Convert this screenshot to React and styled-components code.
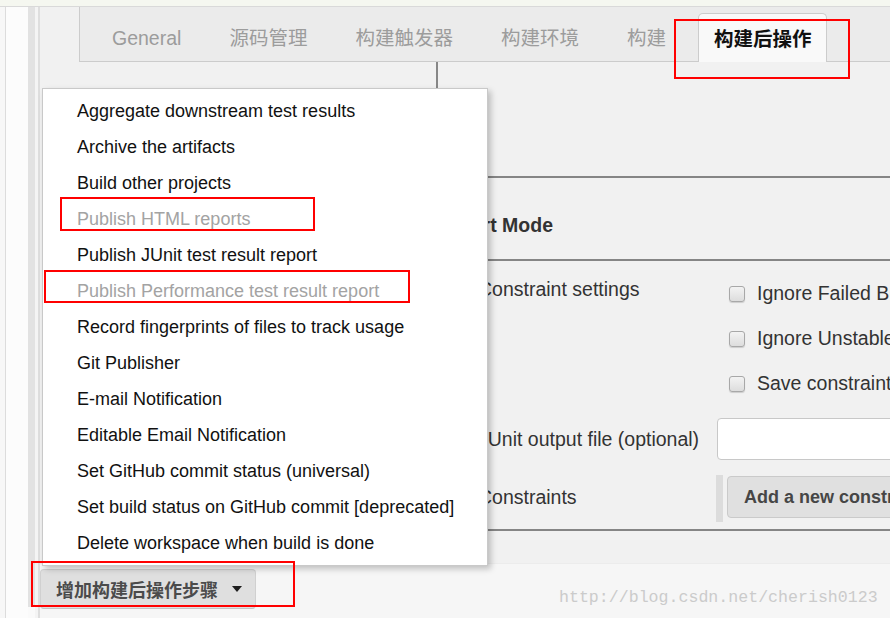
import React from "react";
import styled, { createGlobalStyle } from "styled-components";

const GlobalStyle = createGlobalStyle`
	html, body {
		margin: 0;
		padding: 0;
		background: #ffffff;
	}
	body {
		font-family: "Liberation Sans", "Noto Sans CJK SC", Arial, sans-serif;
	}
`;

const Root = styled.div`
	position: relative;
	width: 890px;
	height: 618px;
	overflow: hidden;
	background: #fafafa;
`;

const TopStrip = styled.div`
	height: 6px;
	background: #f5f7f0;
	border-bottom: 1px solid #d9d9d9;
`;

const Body = styled.div`
	display: flex;
	height: 611px;
`;

const Gutter = styled.div`
	display: flex;
	width: 40px;
	flex: none;
`;

const Lane = styled.div`
	width: ${(p) => p.w}px;
	background: ${(p) => p.bg};
	margin-bottom: ${(p) => p.cut || 0}px;
`;

const Main = styled.div`
	flex: 1;
	display: flex;
	flex-direction: column;
	background: #f1f1f1;
	min-width: 0;
`;

const TabBar = styled.div`
	display: flex;
	align-items: flex-end;
	height: 54px;
	margin-left: 39px;
	padding-left: 8px;
	width: 900px;
	background: #ebebeb;
	border-left: 1px solid #cccccc;
	border-bottom: 1px solid #cccccc;
	flex: none;
`;

const Tab = styled.div`
	height: 48px;
	line-height: 50px;
	padding: 0 24px;
	font-size: 19.5px;
	color: #9c9c9c;
	white-space: nowrap;
`;

const ActiveTab = styled.div`
	position: relative;
	height: 48px;
	line-height: 50px;
	margin-left: 8px;
	margin-bottom: -1px;
	padding: 0 15px;
	font-size: 19.5px;
	font-weight: bold;
	color: #111111;
	background: #f9f9f9;
	border: 1px solid #cccccc;
	border-bottom: none;
	border-radius: 5px 5px 0 0;
	white-space: nowrap;
`;

const Form = styled.div`
	margin-left: 396px;
	display: flex;
	flex-direction: column;
	height: 501px;
	flex: none;
`;

const PrevSection = styled.div`
	height: 114px;
	border-left: 2px solid #878787;
`;

const Rule = styled.div`
	height: 2px;
	background: #858585;
`;

const SectionTitle = styled.div`
	height: 81px;
	box-sizing: border-box;
	padding: 37px 0 0 0;
	line-height: 20px;
	font-size: 19.5px;
	font-weight: bold;
	color: #333333;
`;

const Row = styled.div`
	display: grid;
	grid-template-columns: 280px 1fr;
	align-items: ${(p) => p.align || "center"};
	padding-top: ${(p) => p.pad}px;
	margin-bottom: ${(p) => p.after || 0}px;
`;

const Label = styled.div`
	padding-left: 42px;
	padding-top: ${(p) => p.top || 0}px;
	padding-bottom: ${(p) => p.bottom || 0}px;
	font-size: 19.5px;
	line-height: 20px;
	color: #333333;
	white-space: nowrap;
`;

const CheckList = styled.div`
	display: flex;
	flex-direction: column;
	padding-left: 13px;
`;

const CheckItem = styled.label`
	display: flex;
	align-items: center;
	height: 45px;
	font-size: 19.5px;
	color: #333333;
	white-space: nowrap;
`;

const Box = styled.span`
	width: 14px;
	height: 14px;
	margin-right: 12px;
	border: 1px solid #a8a8a8;
	border-radius: 3px;
	background: linear-gradient(#f3f3f3, #dddddd);
	box-shadow: 0 1px 1px rgba(0, 0, 0, 0.15);
	flex: none;
`;

const TextInput = styled.div`
	height: 40px;
	margin-left: 1px;
	width: 300px;
	background: #ffffff;
	border: 1px solid #c8c8c8;
	border-radius: 4px;
`;

const ButtonStrip = styled.div`
	display: flex;
	height: 47px;
	border-left: 7px solid #dcdcdc;
	box-sizing: border-box;
	padding: 1px 0 0 4px;
`;

const GrayButton = styled.div`
	display: flex;
	align-items: center;
	height: 40px;
	padding: 0 16px;
	font-size: 18px;
	font-weight: bold;
	color: #464646;
	background: #e0e0e0;
	border: 1px solid #cacaca;
	border-radius: 4px;
	white-space: nowrap;
`;

const BottomBar = styled.div`
	flex: 1;
	background: #f6f6f6;
	border-top: 1px solid #ececec;
	padding-top: 5px;
`;

const AddButton = styled.div`
	display: inline-flex;
	align-items: center;
	box-sizing: border-box;
	height: 40px;
	width: 216px;
	padding: 0 14px 0 15px;
	font-size: 18px;
	font-weight: bold;
	color: #4b4b4b;
	background: #dfdfdf;
	border: 1px solid #d0d0d0;
	border-bottom-color: #c4c4c4;
	border-radius: 4px;
	white-space: nowrap;
`;

const Caret = styled.span`
	margin-left: 14px;
	width: 0;
	height: 0;
	border-left: 5px solid transparent;
	border-right: 5px solid transparent;
	border-top: 6px solid #1e1e1e;
`;

const Menu = styled.ul`
	position: absolute;
	left: 42px;
	top: 88px;
	width: 446px;
	height: 478px;
	box-sizing: border-box;
	margin: 0;
	padding: 4px 0 0 34px;
	list-style: none;
	background: #ffffff;
	border: 1px solid #c9c9c9;
	box-shadow: 3px 3px 6px rgba(0, 0, 0, 0.22);
`;

const MenuItem = styled.li`
	height: 36px;
	line-height: 36px;
	font-size: 18px;
	color: ${(p) => (p.disabled ? "#a3a3a3" : "#111111")};
	white-space: nowrap;
`;

const Mark = styled.div`
	position: absolute;
	left: ${(p) => p.x}px;
	top: ${(p) => p.y}px;
	width: ${(p) => p.w}px;
	height: ${(p) => p.h}px;
	box-sizing: border-box;
	border: 2px solid #ff0000;
	pointer-events: none;
`;

const Watermark = styled.div`
	position: absolute;
	left: 559px;
	top: 587px;
	font-family: "Liberation Mono", "DejaVu Sans Mono", monospace;
	font-size: 16.6px;
	line-height: 22px;
	color: #cbcbcb;
	white-space: nowrap;
`;

const tabs = ["General", "源码管理", "构建触发器", "构建环境", "构建"];

const menuItems = [
	{ text: "Aggregate downstream test results" },
	{ text: "Archive the artifacts" },
	{ text: "Build other projects" },
	{ text: "Publish HTML reports", disabled: true },
	{ text: "Publish JUnit test result report" },
	{ text: "Publish Performance test result report", disabled: true },
	{ text: "Record fingerprints of files to track usage" },
	{ text: "Git Publisher" },
	{ text: "E-mail Notification" },
	{ text: "Editable Email Notification" },
	{ text: "Set GitHub commit status (universal)" },
	{ text: "Set build status on GitHub commit [deprecated]" },
	{ text: "Delete workspace when build is done" },
];

const checks = [
	"Ignore Failed Builds",
	"Ignore Unstable Builds",
	"Save constraint log to workspace",
];

const marks = [
	{ x: 674, y: 19, w: 176, h: 60 },
	{ x: 60, y: 197, w: 255, h: 34 },
	{ x: 44, y: 270, w: 366, h: 33 },
	{ x: 31, y: 561, w: 264, h: 46 },
];

const App = () => {
	return (
		<Root>
			<GlobalStyle />
			<TopStrip />
			<Body>
				<Gutter>
					<Lane w={5} bg="#f7f7f7" />
					<Lane w={1} bg="#dcdcdc" />
					<Lane w={22} bg="#fcfcfc" />
					<Lane w={7} bg="#e2e2e2" cut={11} />
					<Lane w={3} bg="#f4f4f4" />
					<Lane w={2} bg="#dedede" />
				</Gutter>
				<Main>
					<TabBar>
						{tabs.map((t) => (
							<Tab key={t}>{t}</Tab>
						))}
						<ActiveTab>构建后操作</ActiveTab>
					</TabBar>
					<Form>
						<PrevSection />
						<Rule />
						<SectionTitle>Expert Mode</SectionTitle>
						<Rule />
						<Row pad={10} align="start">
							<Label top={8}>Constraint settings</Label>
							<CheckList>
								{checks.map((c) => (
									<CheckItem key={c}>
										<Box />
										{c}
									</CheckItem>
								))}
							</CheckList>
						</Row>
						<Row pad={12}>
							<Label>JUnit output file (optional)</Label>
							<TextInput />
						</Row>
						<Row pad={15} after={7}>
							<Label bottom={4}>Constraints</Label>
							<ButtonStrip>
								<GrayButton>Add a new constraint</GrayButton>
							</ButtonStrip>
						</Row>
						<Rule />
					</Form>
					<BottomBar>
						<AddButton>
							增加构建后操作步骤
							<Caret />
						</AddButton>
					</BottomBar>
				</Main>
			</Body>
			<Menu>
				{menuItems.map((m) => (
					<MenuItem key={m.text} disabled={m.disabled}>
						{m.text}
					</MenuItem>
				))}
			</Menu>
			{marks.map((m, i) => (
				<Mark key={i} x={m.x} y={m.y} w={m.w} h={m.h} />
			))}
			<Watermark>http://blog.csdn.net/cherish0123</Watermark>
		</Root>
	);
};

export default App;
